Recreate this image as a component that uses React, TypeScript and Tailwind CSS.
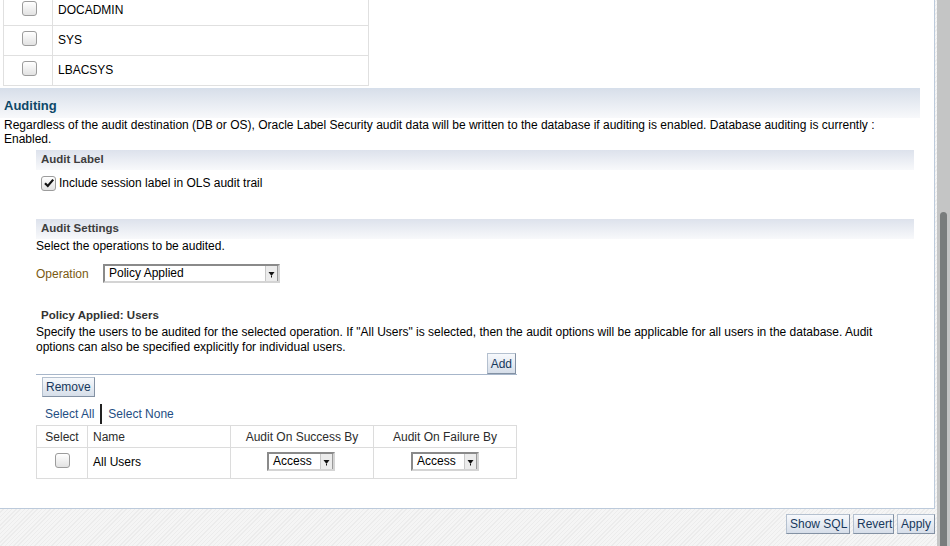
import React from 'react';

const hatch =
  'bg-[repeating-linear-gradient(135deg,#f5f5f5_0px,#f5f5f5_2px,#ececec_2px,#ececec_3px)]';

function Checkbox({ checked = false }: { checked?: boolean }) {
  return (
    <span className="inline-flex w-[15px] h-[15px] shrink-0 items-center justify-center rounded-[3px] border border-[#9c9c9c] bg-gradient-to-b from-white to-[#e2e2e2]">
      {checked && (
        <svg width="12" height="12" viewBox="0 0 12 12">
          <path d="M2 6.2 L4.8 9 L10.2 2.6" fill="none" stroke="#111" strokeWidth="2.2" />
        </svg>
      )}
    </span>
  );
}

function Button({ label, className = '' }: { label: string; className?: string }) {
  return (
    <button
      className={`h-[20px] px-[3px] whitespace-nowrap text-[12px] leading-none text-[#17385c] bg-gradient-to-b from-[#f7f9fc] to-[#d6dee9] border border-[#b4c0cf] border-r-[#8391a3] border-b-[#8391a3] ${className}`}
    >
      {label}
    </button>
  );
}

function Select({ value, width }: { value: string; width: string }) {
  return (
    <div
      className={`flex h-[19px] ${width} bg-white border-2 border-t-[#8a8a8a] border-l-[#8a8a8a] border-r-[#d4d4d4] border-b-[#d4d4d4]`}
    >
      <span className="flex-1 pl-[4px] leading-[15px] text-[12px] text-black">{value}</span>
      <span className="flex w-[13px] items-center justify-center bg-[#ececec] border-l border-[#c8c8c8] border-r border-r-[#9a9a9a]">
        <svg width="7" height="8" viewBox="0 0 7 8">
          <path d="M0.5 2 L6.5 2 L3.5 6 Z" fill="#111" />
          <rect x="3" y="6" width="1" height="1.5" fill="#111" />
        </svg>
      </span>
    </div>
  );
}

function SubHeader({ title, className = '' }: { title: string; className?: string }) {
  return (
    <div
      className={`h-[20px] w-[878px] flex items-center pl-[5px] bg-gradient-to-b from-[#dde2ec] to-[#f8f9fb] text-[11.5px] font-bold text-[#3d3d3d] ${className}`}
    >
      {title}
    </div>
  );
}

const topUsers = ['DOCADMIN', 'SYS', 'LBACSYS'];

export default function App() {
  return (
    <div className={`w-[950px] h-[546px] flex overflow-hidden ${hatch} font-['Liberation_Sans',Arial,sans-serif] text-[12px] text-black`}>
      <div className="w-[937px] flex flex-col">
        {/* Main white panel */}
        <div className="h-[509px] w-[935px] bg-white border-r border-b border-[#bccadb] overflow-hidden">
          {/* Users table (scrolled) */}
          <table className="ml-[3px] mt-[-5px] w-[366px] border-collapse border border-[#e0e0e0]">
            <tbody>
              {topUsers.map((u) => (
                <tr key={u} className="h-[30px] border-b border-[#e0e0e0]">
                  <td className="w-[49px] border-r border-[#e0e0e0] pl-[18px]">
                    <Checkbox />
                  </td>
                  <td className="pl-[5px] pb-[2px] align-middle">{u}</td>
                </tr>
              ))}
            </tbody>
          </table>

          {/* Auditing */}
          <div className="mt-[2px] h-[30px] w-[920px] flex items-end pb-[3px] pl-[4px] bg-gradient-to-b from-[#d8dfea] to-[#f8f9fb] border-t border-[#d6dfeb]">
            <span className="text-[13px] font-bold text-[#0e4868]">Auditing</span>
          </div>
          <p className="w-[915px] pl-[4px] leading-[14px]">
            Regardless of the audit destination (DB or OS), Oracle Label Security audit data will be written to the
            database if auditing is enabled. Database auditing is currently : Enabled.
          </p>

          <div className="ml-[36px]">
            {/* Audit Label */}
            <SubHeader title="Audit Label" className="mt-[4px]" />
            <label className="mt-[5px] ml-[5px] flex items-center gap-[3px] h-[16px]">
              <Checkbox checked />
              <span>Include session label in OLS audit trail</span>
            </label>

            {/* Audit Settings */}
            <SubHeader title="Audit Settings" className="mt-[28px]" />
            <p className="leading-[15px]">Select the operations to be audited.</p>

            <div className="mt-[10px] flex items-center">
              <span className="w-[67px] text-[#7a5a12]">Operation</span>
              <Select value="Policy Applied" width="w-[177px]" />
            </div>

            {/* Policy Applied: Users */}
            <div className="mt-[25px] pl-[5px] text-[11.5px] font-bold text-[#333] leading-[15px]">
              Policy Applied: Users
            </div>
            <p className="mt-[2px] w-[877px] leading-[15px]">
              Specify the users to be audited for the selected operation. If "All Users" is selected, then the audit
              options will be applicable for all users in the database. Audit options can also be specified explicitly
              for individual users.
            </p>

            <div className="mt-[-2px] w-[481px] flex justify-end border-b border-[#a7b6ca]">
              <Button label="Add" className="h-[21px] mr-[1px]" />
            </div>
            <Button label="Remove" className="mt-[2px] ml-[6px] h-[19px]" />

            <div className="mt-[6px] h-[21px] flex items-center text-[#1f4e83]">
              <span className="ml-[9px]">Select All</span>
              <span className="mx-[6px] w-[2px] h-[20px] bg-[#222]" />
              <span>Select None</span>
            </div>

            {/* Audit options table */}
            <table className="mt-[1px] w-[481px] border-collapse border border-[#dcdcdc] text-[12px]">
              <thead>
                <tr className="h-[22px] border-b border-[#dcdcdc] text-[#2c2c2c]">
                  <th className="w-[51px] font-normal border-r border-[#dcdcdc] text-center">Select</th>
                  <th className="w-[143px] font-normal border-r border-[#dcdcdc] text-left pl-[5px]">Name</th>
                  <th className="w-[143px] font-normal border-r border-[#dcdcdc] text-center">Audit On Success By</th>
                  <th className="font-normal text-center">Audit On Failure By</th>
                </tr>
              </thead>
              <tbody>
                <tr className="h-[31px]">
                  <td className="border-r border-[#dcdcdc] pl-[18px]">
                    <Checkbox />
                  </td>
                  <td className="border-r border-[#dcdcdc] pl-[5px] pb-[3px]">All Users</td>
                  <td className="border-r border-[#dcdcdc] pb-[3px]">
                    <div className="flex justify-center pr-[2px]">
                      <Select value="Access" width="w-[68px]" />
                    </div>
                  </td>
                  <td className="pb-[3px]">
                    <div className="flex justify-center">
                      <Select value="Access" width="w-[68px]" />
                    </div>
                  </td>
                </tr>
              </tbody>
            </table>
          </div>
        </div>

        {/* Footer buttons */}
        <div className="flex-1 flex justify-end items-start gap-[3px] pt-[5px] pr-[2px]">
          <Button label="Show SQL" className="w-[64px]" />
          <Button label="Revert" className="w-[41px]" />
          <Button label="Apply" className="w-[38px]" />
        </div>
      </div>

      {/* Scrollbar */}
      <div className="w-[13px] h-full bg-[#c4c5c5] flex flex-col pt-[212px] pl-[3px]">
        <div className="w-[7px] flex-1 rounded-t-[4px] bg-[#797d7d]" />
      </div>
    </div>
  );
}
